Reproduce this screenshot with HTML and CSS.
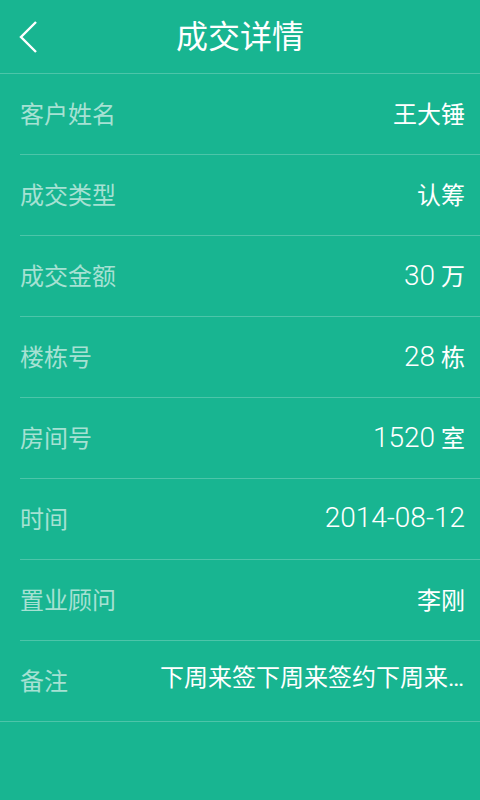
FILE: index.html
```html
<!DOCTYPE html>
<html lang="zh-CN">
<head>
<meta charset="UTF-8">
<meta name="viewport" content="width=device-width, initial-scale=1.0">
<title>成交详情</title>
<link rel="stylesheet" href="styles.css">
</head>
<body>
    <header class="topbar">
        <a class="back" href="#">
            <svg width="22" height="34" viewBox="0 0 22 34">
                <polyline points="18,2 3,17 18,32" fill="none" stroke="#fff" stroke-width="2.4"/>
            </svg>
        </a>
        <h1>成交详情</h1>
    </header>
    <ul class="detail">
        <li><span class="label">客户姓名</span><span class="value">王大锤</span></li>
        <li><span class="label">成交类型</span><span class="value">认筹</span></li>
        <li><span class="label">成交金额</span><span class="value"><span class="num">30</span> 万</span></li>
        <li><span class="label">楼栋号</span><span class="value"><span class="num">28</span> 栋</span></li>
        <li><span class="label">房间号</span><span class="value"><span class="num">1520</span> 室</span></li>
        <li><span class="label">时间</span><span class="value"><span class="num">2014-08-12</span></span></li>
        <li><span class="label">置业顾问</span><span class="value">李刚</span></li>
        <li><span class="label">备注</span><span class="value note">下周来签下周来签约下周来签约下周来签约</span></li>
    </ul>
</body>
</html>
```

FILE: styles.css
```css
body {
    margin: 0;
    padding: 0;
    background-color: #18b591;
    font-family: "Noto Sans CJK SC", "Noto Sans", sans-serif;
    color: #fff;
    height: 800px;
}
.topbar {
    height: 73px;
    border-bottom: 1px solid #4cc5a9;
    display: flex;
    align-items: center;
    justify-content: center;
    position: relative;
}
.topbar h1 {
    margin: 0 0 6px;
    font-size: 32px;
    font-weight: normal;
}
.back {
    position: absolute;
    left: 18px;
    top: 20px;
    display: block;
    line-height: 0;
}
.detail {
    list-style: none;
    margin: 0;
    padding: 0 0 0 20px;
    border-bottom: 1px solid #4cc5a9;
}
.detail li {
    height: 81px;
    box-sizing: border-box;
    display: flex;
    align-items: center;
    justify-content: space-between;
    padding: 0 15px 4px 0;
    border-bottom: 1px solid #4cc5a9;
    font-size: 24px;
}
.detail li:last-child {
    border-bottom: none;
    height: 80px;
}
.label {
    color: #a6e1d3;
    white-space: nowrap;
}
.value {
    font-family: Roboto, "Noto Sans CJK SC", sans-serif;
    white-space: nowrap;
}
.note {
    max-width: 305px;
    overflow: hidden;
    text-overflow: ellipsis;
    line-height: 1.4;
}
.num {
    font-size: 28px;
    font-weight: 300;
}
```
